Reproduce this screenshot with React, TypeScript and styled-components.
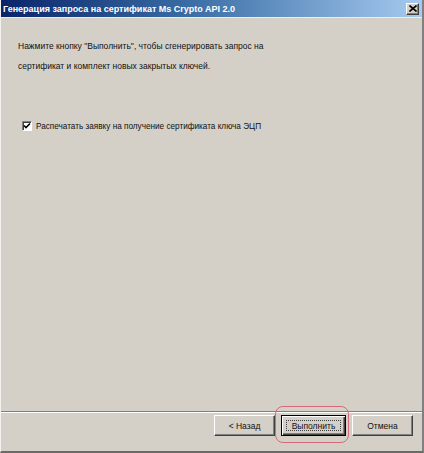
import React from "react";
import styled, { createGlobalStyle } from "styled-components";

const GlobalStyle = createGlobalStyle`
  html, body {
    margin: 0;
    padding: 0;
    background: #d4d0c8;
  }
  * {
    box-sizing: border-box;
  }
`;

const Window = styled.div`
  width: 424px;
  height: 453px;
  display: flex;
  flex-direction: column;
  background: #d4d0c8;
  border-left: 1px solid #f4f2ee;
  border-right: 2px solid #808080;
  border-bottom: 2px solid #6a6a6a;
  font-family: "Liberation Sans", Arial, sans-serif;
  color: #111;
`;

const TitleBar = styled.div`
  height: 18px;
  display: flex;
  align-items: center;
  justify-content: space-between;
  padding: 0 3px 0 2px;
  background: linear-gradient(to right, #0a246a 0%, #3a6ea5 45%, #a6caf0 100%);
  border-bottom: 1px solid #f0eeea;
`;

const Title = styled.span`
  color: #fff;
  font-weight: bold;
  font-size: 9px;
  white-space: nowrap;
`;

const CloseButton = styled.div`
  width: 13px;
  height: 12px;
  display: flex;
  align-items: center;
  justify-content: center;
  background: #d4d0c8;
  border: 1px solid;
  border-color: #fff #404040 #404040 #fff;
  box-shadow: inset -1px -1px 0 #808080;
`;

const Body = styled.div`
  flex: 1;
  padding: 18px 0 0 17px;
`;

const Paragraph = styled.p`
  margin: 0;
  font-size: 8.5px;
  line-height: 20px;
`;

const CheckRow = styled.label`
  display: flex;
  align-items: center;
  gap: 4px;
  margin: 45px 0 0 4px;
  font-size: 8.2px;
`;

const CheckBox = styled.span`
  width: 10px;
  height: 10px;
  display: flex;
  align-items: center;
  justify-content: center;
  background: #fff;
  border: 1px solid;
  border-color: #808080 #fff #fff #808080;
  box-shadow: inset 1px 1px 0 #404040;
`;

const Footer = styled.div`
  height: 40px;
  display: flex;
  justify-content: flex-end;
  align-items: flex-start;
  padding: 3px 9px 0 0;
  border-top: 1px solid #808080;
  box-shadow: inset 0 1px 0 #fff;
`;

const ButtonSlot = styled.div<{ $gap: number }>`
  position: relative;
  margin-left: ${(p) => p.$gap}px;
`;

const Button = styled.button<{ $w: number; $default?: boolean }>`
  width: ${(p) => p.$w}px;
  height: 21px;
  padding: 0;
  font-family: "Liberation Sans", Arial, sans-serif;
  font-size: 8.5px;
  color: #111;
  background: #d4d0c8;
  border: 1px solid;
  border-color: ${(p) =>
    p.$default ? "#000" : "#fff #404040 #404040 #fff"};
  box-shadow: ${(p) =>
    p.$default
      ? "inset 1px 1px 0 #fff, inset -1px -1px 0 #404040, inset -2px -2px 0 #808080"
      : "inset -1px -1px 0 #808080"};
  display: flex;
  align-items: center;
  justify-content: center;
`;

const FocusRect = styled.span`
  display: flex;
  align-items: center;
  justify-content: center;
  width: calc(100% - 8px);
  height: calc(100% - 8px);
  border: 1px dotted #404040;
`;

const Highlight = styled.div`
  position: absolute;
  left: -6px;
  right: -3px;
  top: -9px;
  bottom: -7px;
  border: 1.5px solid #d8697a;
  border-radius: 8px;
  pointer-events: none;
`;

export default function App() {
  return (
    <>
      <GlobalStyle />
      <Window>
        <TitleBar>
          <Title>Генерация запроса на сертификат Ms Crypto API 2.0</Title>
          <CloseButton>
            <svg width="8" height="7" viewBox="0 0 8 7">
              <path d="M0.5 0.5 L7.5 6.5 M7.5 0.5 L0.5 6.5" stroke="#000" strokeWidth="1.6" />
            </svg>
          </CloseButton>
        </TitleBar>
        <Body>
          <Paragraph>
            Нажмите кнопку "Выполнить", чтобы сгенерировать запрос на
            <br />
            сертификат и комплект новых закрытых ключей.
          </Paragraph>
          <CheckRow>
            <CheckBox>
              <svg width="8" height="8" viewBox="0 0 8 8">
                <path d="M1 3.5 L3 5.5 L7 1.5" stroke="#000" strokeWidth="1.6" fill="none" />
              </svg>
            </CheckBox>
            Распечатать заявку на получение сертификата ключа ЭЦП
          </CheckRow>
        </Body>
        <Footer>
          <ButtonSlot $gap={0}>
            <Button $w={61}>&lt; Назад</Button>
          </ButtonSlot>
          <ButtonSlot $gap={6}>
            <Button $w={65} $default>
              <FocusRect>Выполнить</FocusRect>
            </Button>
            <Highlight />
          </ButtonSlot>
          <ButtonSlot $gap={6}>
            <Button $w={61}>Отмена</Button>
          </ButtonSlot>
        </Footer>
      </Window>
    </>
  );
}
